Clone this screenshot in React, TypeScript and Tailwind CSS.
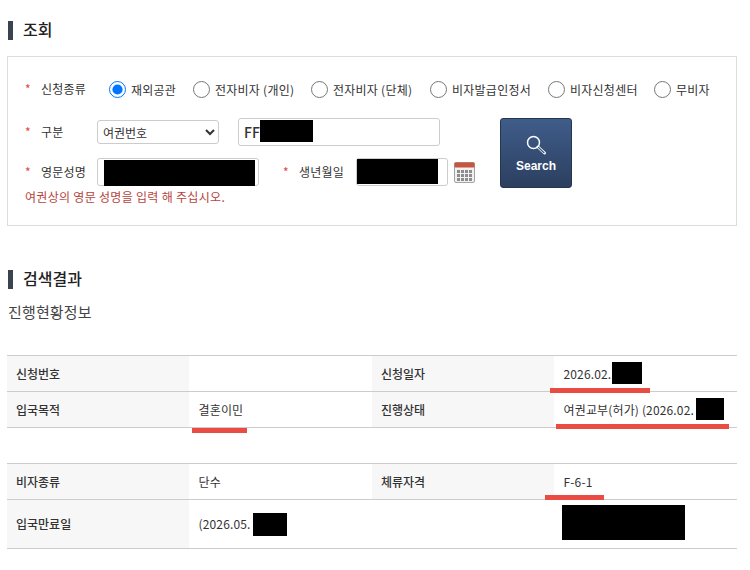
const radios = [
  { label: '재외공관', width: 'w-[84px]', checked: true },
  { label: '전자비자 (개인)', width: 'w-[118px]' },
  { label: '전자비자 (단체)', width: 'w-[119px]' },
  { label: '비자발급인정서', width: 'w-[118px]' },
  { label: '비자신청센터', width: 'w-[106px]' },
  { label: '무비자', width: 'w-[60px]' },
]

// redaction boxes and marker strokes painted over the screenshot
const marks = [
  { id: 'ff', className: 'left-[260px] top-[120px] h-[22px] w-[53px] bg-black' },
  { id: 'name', className: 'left-[104px] top-[160px] h-[26px] w-[151px] bg-black' },
  { id: 'birth', className: 'left-[357px] top-[159px] h-[25px] w-[81px] bg-black' },
  { id: 'date', className: 'left-[612px] top-[362px] h-[22px] w-[30px] bg-black' },
  { id: 'status', className: 'left-[696px] top-[398px] h-[22px] w-[28px] bg-black' },
  { id: 'expire', className: 'left-[253px] top-[513px] h-[23px] w-[34px] bg-black' },
  { id: 'extra', className: 'left-[562px] top-[505px] h-[35px] w-[123px] bg-black' },
  { id: 'line1', className: 'left-[550px] top-[388px] h-[5px] w-[100px] bg-[#ea4c43]' },
  { id: 'line2', className: 'left-[556px] top-[424px] h-[5px] w-[173px] bg-[#ea4c43]' },
  { id: 'line3', className: 'left-[192px] top-[428px] h-[5px] w-[55px] bg-[#ea4c43]' },
  { id: 'line4', className: 'left-[545px] top-[495px] h-[5px] w-[59px] bg-[#ea4c43]' },
]

function Heading({ children }: { children: string }) {
  return (
    <div className="flex h-[19px] items-center">
      <span className="ml-px h-[19px] w-[5px] bg-[#3b4350]" />
      <h2 className="-mt-[2px] ml-[10px] text-[16px] font-medium leading-[19px] text-[#222]">{children}</h2>
    </div>
  )
}

function Req({ children, className = 'w-[72px]' }: { children: string; className?: string }) {
  return (
    <div className={`flex items-center ${className}`}>
      <span className="w-[16px] text-[12px] leading-none text-[#e5413c]">*</span>
      <span className="text-[12px] tracking-[0.2px] text-[#333]">{children}</span>
    </div>
  )
}

function Row({ cells, height = 'h-[36px]' }: { cells: string[]; height?: string }) {
  return (
    <tr>
      {cells.map((text, i) =>
        i % 2 === 0 ? (
          <th
            key={i}
            className={`${height} border-b border-[#ccc] pl-[9px] text-left text-[12px] font-medium text-[#333] ${text ? 'bg-[#f7f7f7]' : ''}`}
          >
            {text}
          </th>
        ) : (
          <td
            key={i}
            className={`${height} border-b border-[#ccc] pl-[9.5px] text-[12px] tracking-[0.15px] text-[#333]`}
          >
            {text}
          </td>
        ),
      )}
    </tr>
  )
}

function ResultTable({ children }: { children: React.ReactNode }) {
  return (
    <table className="w-[730px] table-fixed border-separate border-spacing-0 border-t border-[#ccc]">
      <colgroup>
        <col className="w-[182px]" />
        <col className="w-[183px]" />
        <col className="w-[182px]" />
        <col className="w-[183px]" />
      </colgroup>
      <tbody>{children}</tbody>
    </table>
  )
}

function CalendarIcon() {
  return (
    <svg width="21" height="21" viewBox="0 0 21 21" className="ml-[6px] shrink-0">
      <rect x="0.5" y="0.5" width="20" height="20" rx="1.5" fill="#f1f1f1" stroke="#a3a3a3" />
      <rect x="0.5" y="0.5" width="20" height="5" rx="1" fill="#c8553d" />
      {[3, 7, 11, 15].map((x) =>
        [8, 12, 16].map((y) => <rect key={`${x}-${y}`} x={x} y={y} width="3" height="3" fill="#8d8d8d" />),
      )}
    </svg>
  )
}

export default function App() {
  return (
    <div className="relative h-[570px] w-[750px] overflow-hidden bg-white px-[7px] pt-[21px] font-['Noto_Sans_CJK_KR','Noto_Sans',sans-serif]">
      <Heading>조회</Heading>

      <div className="mt-[16px] h-[170px] w-[730px] border border-[#ddd] pl-[17px] pt-[24px]">
        <div className="flex h-[17px] items-center">
          <Req className="mb-[2px] w-[72px]">신청종류</Req>
          <div className="ml-[12px] flex">
            {radios.map((r) => (
              <label key={r.label} className={`flex items-center ${r.width}`}>
                <input
                  type="radio"
                  name="kind"
                  defaultChecked={r.checked}
                  className="m-0 h-[17px] w-[17px] shrink-0"
                />
                <span className="ml-[5px] whitespace-nowrap text-[12px] tracking-[0.25px] text-[#333]">{r.label}</span>
              </label>
            ))}
          </div>
        </div>

        <div className="mt-[20px] flex">
          <div className="w-[475px]">
            <div className="flex h-[28px] items-center">
              <Req>구분</Req>
              <select className="h-[24px] w-[122px] rounded-[3px] border border-[#ccc] bg-white pl-[1px] text-[12px] text-[#333]">
                <option>여권번호</option>
              </select>
              <input
                readOnly
                defaultValue="FF"
                className="ml-[19px] h-[28px] w-[202px] rounded-[3px] border border-[#ccc] px-[5px] text-[14px] font-medium text-[#333]"
              />
            </div>
            <div className="mt-[12px] flex h-[28px] items-center">
              <Req>영문성명</Req>
              <input className="h-[28px] w-[162px] rounded-[3px] border border-[#ccc]" />
              <Req className="ml-[24px] w-[73px]">생년월일</Req>
              <input className="h-[28px] w-[92px] rounded-[3px] border border-[#ccc]" />
              <CalendarIcon />
            </div>
            <p className="mt-[2px] text-[12px] leading-[18px] tracking-[0.3px] text-[#b5443e]">
              여권상의 영문 성명을 입력 해 주십시오.
            </p>
          </div>

          <button className="flex h-[70px] w-[72px] flex-col items-center rounded-[3px] border border-[#27364f] bg-gradient-to-b from-[#3f5d8a] to-[#2c3f60] pt-[15px] font-['Liberation_Sans',sans-serif] text-[12px] font-bold text-white">
            <svg width="22" height="22" viewBox="0 0 22 22" fill="none" stroke="white">
              <circle cx="8.5" cy="8.5" r="6" strokeWidth="1.5" />
              <path d="M13 13l6.5 6" strokeWidth="3" strokeLinecap="round" />
              <path d="M13.5 13.5l5.5 5.2" strokeWidth="1.2" stroke="#3a5580" strokeLinecap="round" />
            </svg>
            <span className="mt-[2px] leading-[16px]">Search</span>
          </button>
        </div>
      </div>

      <div className="mt-[44px]">
        <Heading>검색결과</Heading>
      </div>
      <h3 className="ml-px mt-[12px] text-[15px] leading-[22px] tracking-[0.15px] text-[#444]">진행현황정보</h3>

      <div className="mt-[32px]">
        <ResultTable>
          <Row cells={['신청번호', '', '신청일자', '2026.02.']} />
          <Row cells={['입국목적', '결혼이민', '진행상태', '여권교부(허가) (2026.02.']} />
        </ResultTable>
      </div>
      <div className="mt-[35px]">
        <ResultTable>
          <Row cells={['비자종류', '단수', '체류자격', 'F-6-1']} />
          <Row cells={['입국만료일', '(2026.05.', '', '']} height="h-[49px]" />
        </ResultTable>
      </div>

      {marks.map((m) => (
        <div key={m.id} className={`absolute ${m.className}`} />
      ))}
    </div>
  )
}
